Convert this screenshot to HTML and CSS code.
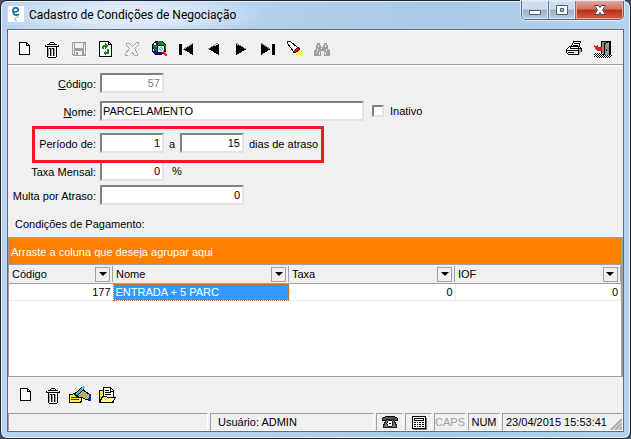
FILE: index.html
```html
<!DOCTYPE html>
<html lang="pt-BR">
<head>
<meta charset="utf-8">
<title>Cadastro de Condições de Negociação</title>
<link rel="stylesheet" href="styles.css">
</head>
<body>
<svg class="defs" aria-hidden="true">
  <defs>
    <pattern id="dither" width="2" height="2" patternUnits="userSpaceOnUse"><rect width="2" height="2" fill="#fffbd0"/><path fill="#ffee58" d="M0 0h1v1h-1zM1 1h1v1h-1z"/></pattern>
    <pattern id="check" width="2" height="2" patternUnits="userSpaceOnUse"><rect width="2" height="2" fill="#fff"/><path d="M0 0h1v1h-1zM1 1h1v1h-1z"/></pattern>
    <symbol id="i-new" viewBox="0 0 18 18"><path fill="#fff" stroke="#000" d="M3.5 2.5h7l3 3v9h-10z"/><path fill="none" stroke="#000" d="M10.5 2.5v3h3"/></symbol>
    <symbol id="i-trash" viewBox="0 0 18 18"><path fill="#fff" d="M4 6h10v11h-10z"/><path fill="none" stroke="#000" d="M7 2.5h4M4 4.5h10M2 6.5h14M6.500 3v1M11.500 3v1M4.500 7v10M13.500 7v10M5 17.500h8M7.500 8v8M10.500 8v8M2.500 5v2M15.500 5v2"/><path fill="none" stroke="#999" d="M8.500 8v8M11.500 8v8M5.500 8v8"/><path stroke="#000" d="M6 8.500h2M9 8.500h2"/></symbol>
    <symbol id="i-save" viewBox="0 0 18 18"><path fill="#a0a0a0" d="M2 2h14v14H3l-1-1z"/><path fill="#f0f0f0" d="M3 3h1v11h-1zM5 3h8v5H5zM14 4h1v10h-1zM5 11h7v4H5z"/><path fill="#a0a0a0" d="M6 12h2v3H6z"/><path fill="none" stroke="#fff" d="M3 16.500h14M16.500 3v13"/></symbol>
    <symbol id="i-refresh" viewBox="0 0 18 18"><path fill="#fff" stroke="#000" d="M2.500 1.500h9l3 3v12h-12z"/><path fill="none" stroke="#000" d="M11.500 1.500v3h3"/><path fill="#078a18" d="M5 9V6l1-1h2V3l3 3-3 3V7H7v2zM12 9v4l-1 1H9v2l-3-3 3-3v2h1V9z"/></symbol>
    <symbol id="i-cancel" viewBox="0 0 18 18"><path fill="#f0f0f0" stroke="#a5a5a5" d="M2.500 3.500h3l3 3 4-4h2v2l-4 4 3 5v2h-3l-3-4-4 4h-2v-2l4-5-3-3z"/><path stroke="#fff" fill="none" d="M4 14.500l4-4M10 7.500l4-4"/></symbol>
    <symbol id="i-globe" viewBox="0 0 18 18"><circle cx="8" cy="8" r="7" fill="#0d18b8" stroke="#000"/><path fill="#13832b" d="M7 1h4l4 5v3h-3V7L9 5H7V3zM2 5l3-1 2 3-1 4-3-2z"/><path fill="#fff" d="M3 3h2v2H3zM2 9h1v2H2z"/><circle cx="10" cy="9" r="4" fill="#dff" stroke="#111"/><path fill="#51d5e5" d="M8 8h1V7h2v1h1v2h-1v1H9v-1H8z"/><path fill="#fff" d="M9 8h1v1H9zM10 9h1v1h-1z"/><path stroke="#e11" stroke-width="2" d="M12 12l4 4"/></symbol>
    <symbol id="i-first" viewBox="0 0 18 18"><path d="M1 4h3v11H1zM15 4v11L5 9z"/><path stroke="#888" d="M5 9.500l10-6"/></symbol>
    <symbol id="i-prev" viewBox="0 0 18 18"><path d="M14 4v11L3 9z"/><path stroke="#888" d="M3 9l10-6"/></symbol>
    <symbol id="i-next" viewBox="0 0 18 18"><path d="M4 4v11l11-6z"/><path stroke="#888" d="M4 3l10 6"/></symbol>
    <symbol id="i-last" viewBox="0 0 18 18"><path d="M2 4v11l10-6zM13 4h3v11h-3z"/><path stroke="#888" d="M2 3l9 6"/></symbol>
    <symbol id="i-torch" viewBox="0 0 18 18"><path fill="url(#dither)" d="M12 10h3l2 2v4l-1 1h-4l-2-2v-3z"/><path fill="#fff" stroke="#000" d="M1.500 3.500v-2h3l7 6-4 4z"/><path fill="#e01b24" stroke="#500" d="M7.500 11.500l4-4 2 1v1l-4 3h-2z"/></symbol>
    <symbol id="i-find" viewBox="0 0 18 18"><path fill="#a0a0a0" d="M4 3h3v2h1v2h2V5h1V3h3v2h1v3l2 3v5h-6v-5H8v5H1v-5l2-3V5h1z"/><path fill="#f0f0f0" d="M5 5h1v2H5zM12 5h1v2h-1zM4 9h1v2H4zM6 12h1v3H6zM13 9h1v2h-1zM12 12h1v3h-1zM8 8h1v1H8zM3 12h1v1H3z"/></symbol>
    <symbol id="i-print" viewBox="0 0 18 18"><path fill="#fff" stroke="#000" d="M5.500 8.500l3-7h7l-2 7zM1.500 9.500l3-3h10l2 2v3l-3 3h-10l-2-2z"/><path stroke="#000" fill="none" d="M9 3.500h5M8 5.500h5M2 10.500h11l3-3M13.500 11v3M3 12.500h6"/><path fill="#aaa" d="M14 9h2v3l-2 2z"/><path fill="#ffdf20" d="M9 12h3v1H9z"/></symbol>
    <symbol id="i-exit" viewBox="0 0 18 18"><path fill="#888" stroke="#000" d="M7.500 1.500h9v13h-9z"/><path fill="#999" stroke="#000" d="M10.500 3.500l5-2v13l-5 3z"/><path fill="#000" d="M12 9h1v2h-1z"/><path fill="#e11919" d="M0 5l2 1 2-1v2h4v4H4v1L1 9z"/><path fill="url(#check)" d="M0 13h9v2h9v2h-2v1H2v-1H0z"/></symbol>
    <symbol id="i-edit" viewBox="0 0 24 18"><path fill="#ffef3d" stroke="#000" d="M1.500 8.500h3l3-2h6v9l-2 1h-10z"/><path stroke="#1629bd" d="M3 11.500h8M3 13.500h8"/><path fill="#b8af72" stroke="#000" d="M10.500 6.500l4-3 7 5v5h-4l-3-2h-4l-1-2z"/><path fill="#1629bd" d="M21 8h2v7h-3v-3h1z"/><path stroke="#000" stroke-width="3" d="M7 10l8-8"/><path stroke="#36bdd3" stroke-width="2" d="M8 9l8-8"/></symbol>
    <symbol id="i-folder" viewBox="0 0 18 18"><path fill="#ffe83d" stroke="#000" d="M1.500 4.500h4v5h10v7h-13l-1-2z"/><path fill="#fff" stroke="#000" d="M5.500 1.500h7l3 3v7h-10z"/><path stroke="#000" fill="none" d="M7 4.500h4M7 6.500h6M7 8.500h6M12.500 2v3h3"/><path fill="url(#dither)" stroke="#000" d="M1.500 16.500l3-6h4l1 1h8l-3 5z"/></symbol>
    <symbol id="i-phone" viewBox="0 0 18 18"><path fill="#555" stroke="#000" d="M1.500 7.500v-2l3-2h9l3 2v2h-3l-1-1h-7l-1 1z"/><path fill="#777" stroke="#222" d="M5.500 6.500h7l3 6v2h-13v-2z"/><circle cx="9" cy="10.500" r="3" fill="#fff" stroke="#222"/><path d="M8 10h2v1H8z"/></symbol>
    <symbol id="i-calc" viewBox="0 0 18 18"><path fill="#fff" stroke="#000" d="M2.500 3.500h13v12h-13z"/><path fill="none" stroke="#000" d="M4.500 5.500h9v2h-9zM4 9.500h2M7 9.500h1M9 9.500h2M12 9.500h2M4 11.500h2M7 11.500h1M9 11.500h2M12 11.500h2M4 13.500h2M7 13.500h1M9 13.500h2M12 13.500h2"/><path stroke="#777" d="M3 16.500h13.500v-12" fill="none"/></symbol>
  </defs>
</svg>
<main class="window">
  <header class="titlebar">
    <svg class="app-icon" viewBox="0 0 16 16" aria-hidden="true"><path fill="#fff" d="M0 0h16v16H0z"/><path fill="none" stroke="#357a9e" stroke-width="2" d="M5 6c4 0 6-1 5-3S5 1 5 5s3 5 6 3"/><path fill="none" stroke="#6fa3bd" d="M10 9c2 2-3 2-3 4s1 2 2 2"/></svg>
    <h1>Cadastro de Condições de Negociação</h1>
    <div class="caption">
      <button type="button" class="cap min" aria-label="Minimizar"><svg viewBox="0 0 14 12"><path fill="#fff" stroke="#4d5c70" d="M1.500 6.500h11v4h-11z"/></svg></button>
      <button type="button" class="cap max" aria-label="Maximizar"><svg viewBox="0 0 14 12"><path fill="#fff" fill-rule="evenodd" stroke="#4d5c70" d="M1.500 1.500h11v9h-11zM5.500 4.500v3h3v-3z"/></svg></button>
      <button type="button" class="cap close" aria-label="Fechar"><svg viewBox="0 0 14 12"><path fill="#fff" stroke="#54465a" d="M1.500 1.500h4l1.500 2 1.500-2h4l-3 4.500 3 4.500h-4l-1.500-2-1.500 2h-4l3-4.500z"/></svg></button>
    </div>
  </header>
  <div class="client">
    <div class="toolbar" role="toolbar">
      <button type="button" aria-label="Novo"><svg><use href="#i-new"/></svg></button>
      <button type="button" aria-label="Excluir"><svg><use href="#i-trash"/></svg></button>
      <button type="button" aria-label="Salvar" disabled><svg><use href="#i-save"/></svg></button>
      <button type="button" aria-label="Atualizar"><svg><use href="#i-refresh"/></svg></button>
      <button type="button" aria-label="Cancelar" disabled><svg><use href="#i-cancel"/></svg></button>
      <button type="button" aria-label="Pesquisar"><svg><use href="#i-globe"/></svg></button>
      <button type="button" aria-label="Primeiro"><svg><use href="#i-first"/></svg></button>
      <button type="button" aria-label="Anterior"><svg><use href="#i-prev"/></svg></button>
      <button type="button" aria-label="Próximo"><svg><use href="#i-next"/></svg></button>
      <button type="button" aria-label="Último"><svg><use href="#i-last"/></svg></button>
      <button type="button" aria-label="Filtrar"><svg><use href="#i-torch"/></svg></button>
      <button type="button" aria-label="Localizar" disabled><svg><use href="#i-find"/></svg></button>
      <span class="spacer"></span>
      <button type="button" class="wide" aria-label="Imprimir"><svg><use href="#i-print"/></svg></button>
      <button type="button" class="wide" aria-label="Sair"><svg><use href="#i-exit"/></svg></button>
    </div>
    <form class="form">
      <div class="row"><label class="lead" for="codigo"><u>C</u>ódigo:</label><input id="codigo" class="short num" value="57" disabled></div>
      <div class="row roomy"><label class="lead" for="nome"><u>N</u>ome:</label><input id="nome" class="long" value="PARCELAMENTO"><label class="check"><input type="checkbox">Inativo</label></div>
      <div class="row marked"><label class="lead" for="de">Período de:</label><input id="de" class="short num" value="1"><label class="mid" for="ate">a</label><input id="ate" class="short num" value="15"><span class="unit">dias de atraso</span></div>
      <div class="row tight"><label class="lead" for="taxa">Taxa Mensal:</label><input id="taxa" class="short num" value="0"><span class="percent">%</span></div>
      <div class="row"><label class="lead" for="multa">Multa por Atraso:</label><input id="multa" class="medium num" value="0"></div>
      <h2>Condições de Pagamento:</h2>
    </form>
    <section class="grid">
      <div class="group">Arraste a coluna que deseja agrupar aqui</div>
      <table>
        <colgroup><col class="c1"><col class="c2"><col class="c3"><col></colgroup>
        <thead><tr>
          <th><div>Código<button type="button" aria-label="Filtrar Código"></button></div></th>
          <th><div>Nome<button type="button" aria-label="Filtrar Nome"></button></div></th>
          <th><div>Taxa<button type="button" aria-label="Filtrar Taxa"></button></div></th>
          <th><div>IOF<button type="button" aria-label="Filtrar IOF"></button></div></th>
        </tr></thead>
        <tbody><tr><td class="num">177</td><td class="selected">ENTRADA + 5 PARC</td><td class="num">0</td><td class="num">0</td></tr></tbody>
      </table>
    </section>
    <div class="actions" role="toolbar">
      <button type="button" aria-label="Nova condição"><svg><use href="#i-new"/></svg></button>
      <button type="button" aria-label="Excluir condição"><svg><use href="#i-trash"/></svg></button>
      <button type="button" aria-label="Editar condição"><svg class="hand"><use href="#i-edit"/></svg></button>
      <button type="button" aria-label="Abrir condição"><svg><use href="#i-folder"/></svg></button>
    </div>
    <footer class="status">
      <span class="blank"></span>
      <span class="user">Usuário: ADMIN</span>
      <span class="key"><svg><use href="#i-phone"/></svg></span>
      <span class="key"><svg><use href="#i-calc"/></svg></span>
      <span class="lock off">CAPS</span>
      <span class="lock">NUM</span>
      <span class="clock">23/04/2015 15:53:41<svg class="grip" viewBox="0 0 12 12"><path fill="none" stroke="#aaa" stroke-width="2" d="M1 12L12 1M5 12l7-7M9 12l3-3"/></svg></span>
    </footer>
  </div>
</main>
</body>
</html>
```
FILE: styles.css
```css
*, *::after { box-sizing: border-box; }

body {
  margin: 0;
  background: #4b4f58;
  color: #000;
  font: 11px/14px "Liberation Sans", Arial, sans-serif;
}

button, input { font: inherit; color: inherit; }
button { padding: 0; border: 0; background: none; }
.defs { position: absolute; width: 0; height: 0; }

.window {
  display: flex;
  flex-direction: column;
  min-height: 100vh;
  padding: 0 6px 6px;
  border: 1px solid #20232e;
  border-radius: 7px;
  background: linear-gradient(90deg, #b9d3ee, #b5d1ec 40%, #a9c9e6 70%, #b5d3ef);
  box-shadow: inset 0 0 0 1px #e4f2fd;
}

.titlebar {
  display: flex;
  align-items: flex-start;
  height: 28px;
  background: radial-gradient(ellipse 140px 24px at 120px 14px, #dceafa 40%, transparent);
}

.app-icon { width: 16px; height: 16px; margin: 5px 5px 0 1px; }

h1 {
  flex: 1;
  margin: 0;
  padding-top: 5px;
  font: 12px/18px Roboto, "Open Sans", sans-serif;
}

.caption {
  display: flex;
  height: 19px;
  border: 1px solid #59687c;
  border-top: 0;
  border-radius: 0 0 5px 5px;
  overflow: hidden;
  box-shadow: 0 0 0 1px #d9eafa;
}

.cap {
  display: flex;
  justify-content: center;
  align-items: center;
  width: 27px;
  border-right: 1px solid #68788d;
  background: linear-gradient(#cbdced 45%, #9cb1c8 50%, #b8cee4);
  box-shadow: inset 0 0 0 1px #dce9f5;
}

.cap svg { width: 14px; height: 12px; }

.close {
  width: 47px;
  border: 0;
  background: linear-gradient(#e2a596, #cf705b 45%, #b92f16 50%, #d35c3b);
  box-shadow: inset 0 0 0 1px #e7a995;
}

.client {
  display: flex;
  flex: 1;
  flex-direction: column;
  border: 1px solid #606c78;
  background: #f0f0f0;
}

.toolbar {
  display: flex;
  height: 35px;
  padding: 2px 6px 0 3px;
  border-top: 1px solid #fff;
  border-bottom: 1px solid #a0a0a0;
}

.toolbar button, .actions button {
  display: flex;
  justify-content: center;
  align-items: center;
  width: 27px;
}

.toolbar .wide { width: 29px; }
.toolbar svg, .actions svg, .key svg { width: 18px; height: 18px; shape-rendering: crispEdges; }
.actions .hand { width: 24px; flex: none; }
.spacer { flex: 1; }

.form { padding: 7px 0 0; border-top: 1px solid #fff; }
.row { display: flex; align-items: center; height: 20px; margin-bottom: 8px; }
.roomy { margin-bottom: 12px; }
.tight { margin-bottom: 4px; }
.lead { width: 92px; padding: 2px 4px 0 0; text-align: right; white-space: nowrap; }

.row input:not([type="checkbox"]) {
  height: 20px;
  padding: 0 2px 1px 1px;
  border: 2px solid;
  border-color: #808080 #e3e3e3 #e3e3e3 #808080;
  background: #fff;
  outline: 0;
}

.row .short { width: 64px; }
.row .medium { width: 144px; }
.row .long { width: 264px; }
.row input:disabled { color: #808080; }
.num { text-align: right; }

.check { display: flex; align-items: center; gap: 6px; margin-left: 8px; }

.check input {
  appearance: none;
  width: 12px;
  height: 12px;
  margin: 0;
  border: 2px solid;
  border-color: #808080 #e3e3e3 #e3e3e3 #808080;
  background: #fff;
}

.mid { width: 16px; padding-top: 2px; text-align: center; }
.unit { padding: 2px 0 0 5px; }
.percent { padding-left: 8px; }

.marked { position: relative; }

.marked::after {
  content: "";
  position: absolute;
  top: -7px;
  left: 24px;
  width: 292px;
  height: 37px;
  border: 3px solid #ed1c24;
  pointer-events: none;
}

h2 { margin: 12px 0 6px 7px; font: inherit; }

.grid {
  flex: 1;
  border: 1px solid #a0a0a0;
  border-width: 1px 2px 1px 1px;
  background: #fff;
}

.group {
  height: 27px;
  padding-left: 2px;
  border-bottom: 1px solid #a0a0a0;
  background: #ff8000;
  color: #fff;
  line-height: 28px;
}

table { width: 100%; border-collapse: collapse; table-layout: fixed; }
.c1 { width: 104px; }
.c2 { width: 176px; }
.c3 { width: 166px; }

th {
  padding: 0;
  border-bottom: 1px solid #a0a0a0;
  background: #f0f0f0;
  font-weight: normal;
}

th div {
  display: flex;
  justify-content: space-between;
  align-items: center;
  height: 16px;
  margin: 1px 0;
  padding: 0 2px 0 3px;
  border-right: 1px solid #a0a0a0;
}

th button {
  display: flex;
  justify-content: center;
  align-items: center;
  width: 15px;
  height: 15px;
  border: 1px solid #a0a0a0;
}

th button::after {
  content: "";
  border: 4px solid transparent;
  border-top-color: #000;
  border-bottom: 0;
}

td {
  height: 17px;
  padding: 0 2px;
  border: solid #ececec;
  border-width: 0 1px 1px 0;
  line-height: 14px;
}

.selected { background: #3399ff; color: #fff; outline: 1px dotted #d06a18; outline-offset: -1px; }

.actions { display: flex; height: 36px; padding-left: 4px; }

.status { display: flex; gap: 2px; height: 18px; }

.status span {
  display: flex;
  flex: none;
  align-items: center;
  border: 1px solid;
  border-color: #a0a0a0 #fff #fff #a0a0a0;
}

.status .blank { flex: 1 1 200px; }
.status .user { flex: 1 1 164px; padding-left: 7px; }
.status .key { justify-content: center; width: 27px; }
.status .lock { justify-content: center; width: 32px; }
.status .off { color: #a0a0a0; }
.status .clock { justify-content: space-between; width: 121px; padding-left: 3px; }
.grip { align-self: flex-end; width: 12px; height: 12px; }
```
